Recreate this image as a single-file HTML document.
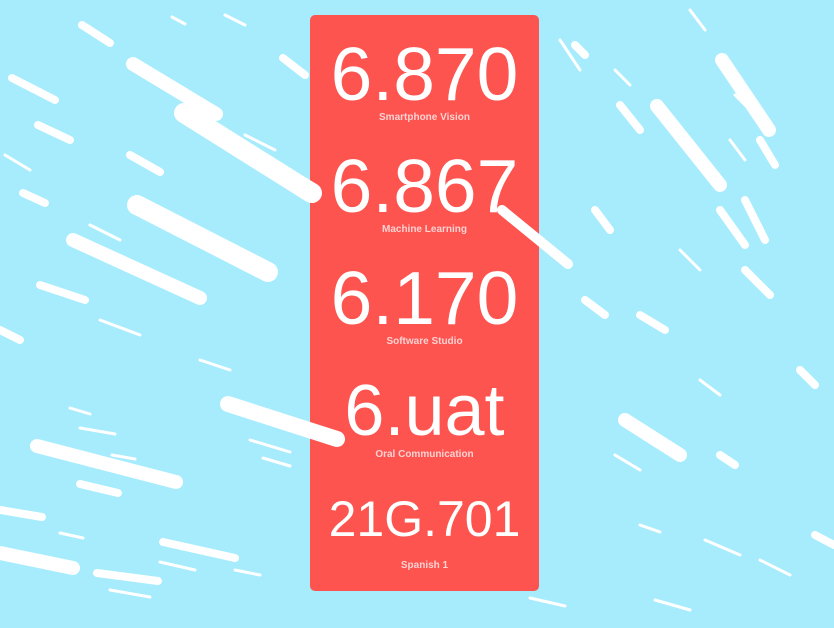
<!DOCTYPE html>
<html><head><meta charset="utf-8"><style>
html,body{margin:0;padding:0;width:834px;height:628px;overflow:hidden;background:#a6ecfd;font-family:"Liberation Sans",sans-serif}
svg{position:absolute;left:0;top:0}
.card{position:absolute;left:310px;top:15px;width:229px;height:576px;background:#fd5450;border-radius:5px}
.row{position:absolute;left:0;width:229px;text-align:center;color:#fff}
.num{font-size:75px;line-height:75px;height:75px}
.lab{font-size:10px;font-weight:bold;color:#fcd2d2;margin-top:0px}
</style></head><body>
<svg width="834" height="628" stroke="#fff" stroke-linecap="round" fill="none">
<g stroke-width="14">
<line x1="133" y1="64" x2="216" y2="114"/>
<line x1="73" y1="240" x2="200" y2="298"/>
<line x1="37" y1="446" x2="176" y2="482"/>
<line x1="0" y1="553" x2="73" y2="568"/>
<line x1="657" y1="106" x2="720" y2="185"/>
<line x1="722" y1="60" x2="769" y2="130"/>
<line x1="625" y1="420" x2="680" y2="455"/>
</g>
<g stroke-width="20">
<line x1="184" y1="113" x2="310" y2="192"/>
<line x1="137" y1="205" x2="268" y2="272"/>
</g>
<g stroke-width="8">
<line x1="97" y1="573" x2="158" y2="581"/>
<line x1="0" y1="510" x2="42" y2="517"/>
<line x1="80" y1="484" x2="118" y2="493"/>
<line x1="163" y1="542" x2="235" y2="558"/>
<line x1="283" y1="58" x2="305" y2="75"/>
<line x1="82" y1="25" x2="110" y2="43"/>
<line x1="12" y1="78" x2="55" y2="100"/>
<line x1="38" y1="125" x2="70" y2="140"/>
<line x1="23" y1="193" x2="45" y2="203"/>
<line x1="130" y1="155" x2="160" y2="172"/>
<line x1="40" y1="285" x2="85" y2="300"/>
<line x1="0" y1="330" x2="20" y2="340"/>
<line x1="595" y1="210" x2="610" y2="230"/>
<line x1="620" y1="105" x2="640" y2="130"/>
<line x1="575" y1="45" x2="585" y2="55"/>
<line x1="745" y1="200" x2="765" y2="240"/>
<line x1="745" y1="270" x2="770" y2="295"/>
<line x1="800" y1="370" x2="815" y2="385"/>
<line x1="585" y1="300" x2="605" y2="315"/>
<line x1="640" y1="315" x2="665" y2="330"/>
<line x1="720" y1="210" x2="745" y2="245"/>
<line x1="760" y1="140" x2="775" y2="165"/>
<line x1="815" y1="535" x2="834" y2="545"/>
<line x1="720" y1="455" x2="735" y2="465"/>
</g>
<g stroke-width="3">
<line x1="70" y1="408" x2="90" y2="414"/>
<line x1="80" y1="428" x2="115" y2="434"/>
<line x1="112" y1="455" x2="135" y2="459"/>
<line x1="60" y1="533" x2="83" y2="538"/>
<line x1="250" y1="440" x2="290" y2="452"/>
<line x1="263" y1="458" x2="290" y2="466"/>
<line x1="160" y1="562" x2="195" y2="570"/>
<line x1="235" y1="570" x2="260" y2="575"/>
<line x1="110" y1="590" x2="150" y2="597"/>
<line x1="172" y1="17" x2="185" y2="24"/>
<line x1="225" y1="15" x2="245" y2="25"/>
<line x1="245" y1="135" x2="275" y2="150"/>
<line x1="5" y1="155" x2="30" y2="170"/>
<line x1="100" y1="320" x2="140" y2="335"/>
<line x1="90" y1="225" x2="120" y2="240"/>
<line x1="200" y1="360" x2="230" y2="370"/>
<line x1="560" y1="40" x2="580" y2="70"/>
<line x1="655" y1="600" x2="690" y2="610"/>
<line x1="640" y1="525" x2="660" y2="532"/>
<line x1="760" y1="560" x2="790" y2="575"/>
<line x1="705" y1="540" x2="740" y2="555"/>
<line x1="615" y1="455" x2="640" y2="470"/>
<line x1="680" y1="250" x2="700" y2="270"/>
<line x1="530" y1="598" x2="565" y2="606"/>
<line x1="700" y1="380" x2="720" y2="395"/>
<line x1="690" y1="10" x2="705" y2="30"/>
<line x1="735" y1="95" x2="750" y2="110"/>
<line x1="730" y1="140" x2="745" y2="160"/>
<line x1="615" y1="70" x2="630" y2="85"/>
</g>
</svg>
<div class="card">
<div class="row" style="top:22px"><div class="num">6.870</div><div class="lab">Smartphone Vision</div></div>
<div class="row" style="top:134px"><div class="num">6.867</div><div class="lab">Machine Learning</div></div>
<div class="row" style="top:246px"><div class="num">6.170</div><div class="lab">Software Studio</div></div>
<div class="row" style="top:359px"><div class="num" style="font-size:72px">6.uat</div><div class="lab">Oral Communication</div></div>
<div class="row" style="top:478px"><div class="num" style="font-size:50px;line-height:52px;height:52px">21G.701</div><div class="lab" style="margin-top:15px">Spanish 1</div></div>
</div>
<svg width="834" height="628" stroke="#fff" stroke-linecap="round" fill="none">
<line x1="228" y1="404" x2="337" y2="439" stroke-width="16"/>
<line x1="502" y1="210" x2="568" y2="264" stroke-width="10"/>
<line x1="302" y1="187" x2="312" y2="193" stroke-width="20"/>
</svg>
</body></html>
